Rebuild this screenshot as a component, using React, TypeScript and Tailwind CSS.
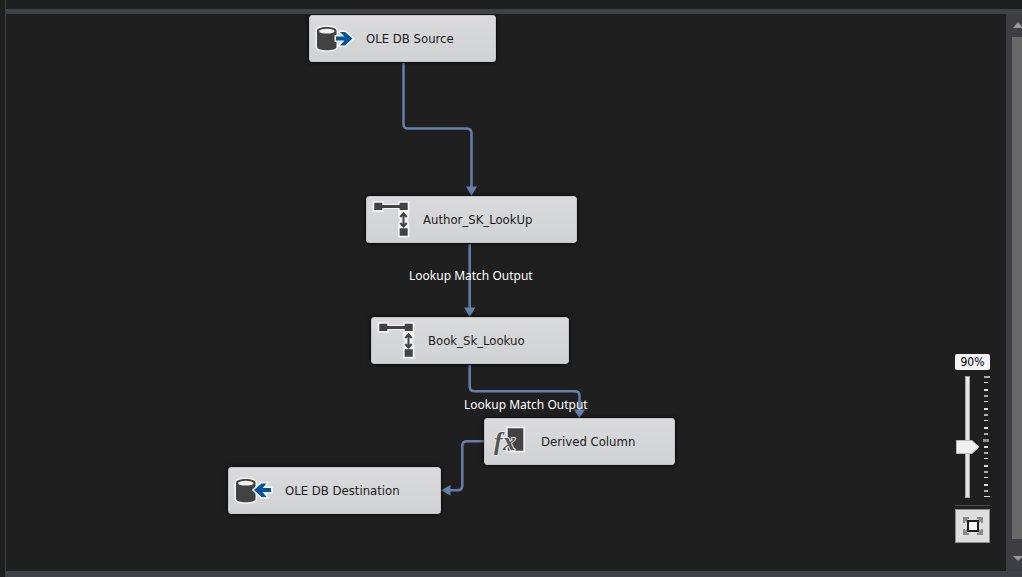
import { useState } from "react";
import type { ReactNode } from "react";

function DatabaseIcon({ direction }: { direction: "out" | "in" }) {
  const arrow =
    direction === "out"
      ? "M21 17.5H29.500L25 13H30L37.5 19.5L30 26.5H25L29.500 21.5H21Z"
      : "M37 17H28.500L32.500 12.5H27.5L20 19L27.5 26H32.500L28.500 21H37Z";
  const body = "M2 11.5C2 6.8 21.5 6.8 21.5 11.5V28C21.5 32.4 2 32.4 2 28Z";
  return (
    <svg viewBox="0 0 40 40" className="size-10" aria-hidden="true">
      <g fill="#f3f3f3" stroke="#f3f3f3" strokeWidth="3" strokeLinejoin="round">
        <path d={body} />
        <path d={arrow} />
      </g>
      <path d={body} fill="#424242" />
      <ellipse cx="11.8" cy="12.2" rx="7.8" ry="2.4" fill="#f0f0f0" />
      <path d={arrow} fill="#00539c" stroke="#f3f3f3" strokeWidth="3" paintOrder="stroke" />
    </svg>
  );
}

function LookupIcon() {
  return (
    <svg viewBox="0 0 40 40" className="size-10" aria-hidden="true">
      <path
        fill="#f3f3f3"
        d="M0.500 1H12V4H26V1H37.500V12L37 17L36 20L37 23L37.500 26V37.500H26V23L28 20L26 17V12V9H12V12H0.500Z"
      />
      <g fill="#424242">
        <path d="M2.300 2.700H10.300V10H2.300ZM27.700 2.700H35.700V10H27.700ZM27.700 28.300H35.700V35.700H27.700Z" />
        <path d="M10 5H28V8H10Z" />
      </g>
      <path
        d="M31.500 13.500V26M28.300 17L31.500 13.300L34.700 17M28.300 23L31.500 26.500L34.700 23"
        fill="none"
        stroke="#424242"
        strokeWidth="2"
      />
    </svg>
  );
}

function FunctionIcon() {
  return (
    <svg viewBox="0 0 40 40" className="size-10" aria-hidden="true">
      <path d="M16 4.500H35V30.500H16Z" fill="#f3f3f3" />
      <path d="M17.700 6.300H33.300V28.700H17.700Z" fill="#424242" />
      <text
        y="28"
        fontFamily="Liberation Serif, serif"
        fontStyle="italic"
        fontWeight="700"
        fontSize="25"
        fill="#555555"
        stroke="#e4e4e4"
        strokeWidth="2"
        paintOrder="stroke"
      >
        <tspan x="4">f</tspan>
        <tspan x="13">x</tspan>
      </text>
    </svg>
  );
}

function FlowNode({ place, icon, label }: { place: string; icon: ReactNode; label: string }) {
  return (
    <div
      className={`absolute flex h-[47px] items-center gap-[11px] rounded-[3px] border border-[#c4c4c6] bg-linear-to-b from-[#dadadc] to-[#d0d2d3] pl-[5px] text-[#1b1b1b] shadow-[0_0_4px_#000000] ${place}`}
    >
      {icon}
      <span className="whitespace-nowrap font-['DejaVu_Sans_Condensed',sans-serif] text-[13px]">{label}</span>
    </div>
  );
}

function Connectors() {
  return (
    <svg className="absolute top-0 left-0 h-full w-full" aria-hidden="true">
      <g fill="none" stroke="#6480aa" strokeWidth="2.5">
        <path d="M397.500 49V110Q397.500 114.500 402 114.500H460.500Q465.500 114.500 465.500 119.500V174" />
        <path d="M463.700 230V296" />
        <path d="M463.700 351V372.500Q463.700 377.300 468.500 377.300H568.700Q573.500 377.300 573.500 382V398" />
        <path d="M478 427.300H461Q456.300 427.300 456.300 432V471.500Q456.300 476.300 451.500 476.300H442" />
      </g>
      <g fill="#6480aa">
        <path d="M460 172.500H471L465.500 182Z" />
        <path d="M458.200 293.500H469.200L463.700 303Z" />
        <path d="M568 395.500H579L573.500 404.500Z" />
        <path d="M444.500 471V481.500L435 476.300Z" />
      </g>
    </svg>
  );
}

function ZoomPanel() {
  const [zoom, setZoom] = useState(90);
  const thumbY = 71 + (90 - zoom) * 0.6;
  return (
    <div className="absolute right-4 bottom-7 flex w-[35px] flex-col">
      <label
        htmlFor="zoom"
        className="flex h-4 items-center justify-center rounded-xs bg-[#f3f3f6] font-['DejaVu_Sans_Condensed',sans-serif] text-[12px] text-black"
      >
        {zoom}%
      </label>
      <div className="relative mt-1.5 h-[124px]">
        <svg viewBox="0 0 35 124" className="h-full w-full" aria-hidden="true">
          <rect x="10.500" y="0.500" width="4" height="121" fill="#e6e6e6" stroke="#a5a5a5" />
          {Array.from({ length: 20 }, (_, i) => (
            <rect
              key={i}
              x={i === 10 ? 28 : 29}
              y={Math.round(i * 6.33)}
              width={i === 10 ? 6 : i === 0 || i === 19 ? 6 : 4}
              height={i === 10 ? 3 : i % 3 === 1 ? 1 : 2}
              fill={i === 10 ? "#8f8f8f" : i % 3 === 0 ? "#adadad" : "#e0e0e0"}
            />
          ))}
          <path
            transform={`translate(0 ${thumbY})`}
            d="M1.500 -6.500H17L24 0L17 6.500H1.500Z"
            fill="#efefef"
            stroke="#b8b8b8"
          />
        </svg>
        <input
          id="zoom"
          type="range"
          min={10}
          max={200}
          value={zoom}
          onChange={(e) => setZoom(Number(e.target.value))}
          className="absolute inset-0 h-full w-6 cursor-pointer opacity-0 [direction:rtl] [writing-mode:vertical-lr]"
        />
      </div>
      <div className="mt-[5px] border-t border-[#4a4a4a]" />
      <button
        type="button"
        aria-label="Zoom to fit"
        className="mt-[3px] flex h-[34px] items-center justify-center border border-[#8c8c8c] bg-[#dedede]"
      >
        <svg viewBox="0 0 20 18" className="h-[18px] w-5" aria-hidden="true">
          <path
            d="M0 0H6V2H4L6 4L4 6L2 4V6H0ZM20 0H14V2H16L14 4L16 6L18 4V6H20ZM0 18H6V16H4L6 14L4 12L2 14V12H0ZM20 18H14V16H16L14 14L16 12L18 14V12H20Z"
            fill="#8a8a8a"
          />
          <rect x="5" y="4" width="10" height="10" fill="#ffffff" stroke="#1e1e1e" strokeWidth="2" />
        </svg>
      </button>
    </div>
  );
}

function ScrollRail() {
  return (
    <div className="flex w-4 shrink-0 flex-col overflow-hidden bg-[#3e3e42] pl-1.5">
      <svg viewBox="0 0 10 23" className="h-[23px] w-2.5 shrink-0" aria-hidden="true">
        <path d="M1 14L6 8L11 14Z" fill="#999999" />
      </svg>
      <div className="flex-1 bg-[#686868]" />
      <svg viewBox="0 0 10 32" className="h-8 w-2.5 shrink-0" aria-hidden="true">
        <path d="M1 17L6 22L11 17Z" fill="#999999" />
      </svg>
    </div>
  );
}

export default function App() {
  return (
    <div className="flex h-screen bg-[#1f1f1f] pl-[5px] font-['Noto_Sans',sans-serif] text-[12px] leading-4">
      <div className="flex min-w-0 flex-1 flex-col border-l border-[#3f3f42]">
        <div className="h-[9px] shrink-0" />
        <div className="h-[5px] shrink-0 bg-[#3f4247]" />
        <div className="flex min-h-0 flex-1">
          <main className="relative min-w-0 flex-1 overflow-hidden">
            <Connectors />
            <FlowNode place="left-[303px] top-px w-[187px]" icon={<DatabaseIcon direction="out" />} label="OLE DB Source" />
            <FlowNode place="left-[360px] top-[182px] w-[211px]" icon={<LookupIcon />} label="Author_SK_LookUp" />
            <FlowNode place="left-[365px] top-[303px] w-[198px]" icon={<LookupIcon />} label="Book_Sk_Lookuo" />
            <FlowNode place="left-[478px] top-[404px] w-[191px]" icon={<FunctionIcon />} label="Derived Column" />
            <FlowNode place="left-[222px] top-[453px] w-[213px]" icon={<DatabaseIcon direction="in" />} label="OLE DB Destination" />
            <span className="absolute top-[254px] left-[403px] whitespace-nowrap text-white">Lookup Match Output</span>
            <span className="absolute top-[383px] left-[458px] whitespace-nowrap text-white">Lookup Match Output</span>
            <ZoomPanel />
          </main>
          <ScrollRail />
        </div>
        <div className="h-1.5 shrink-0 bg-[#3f4247]" />
      </div>
    </div>
  );
}
